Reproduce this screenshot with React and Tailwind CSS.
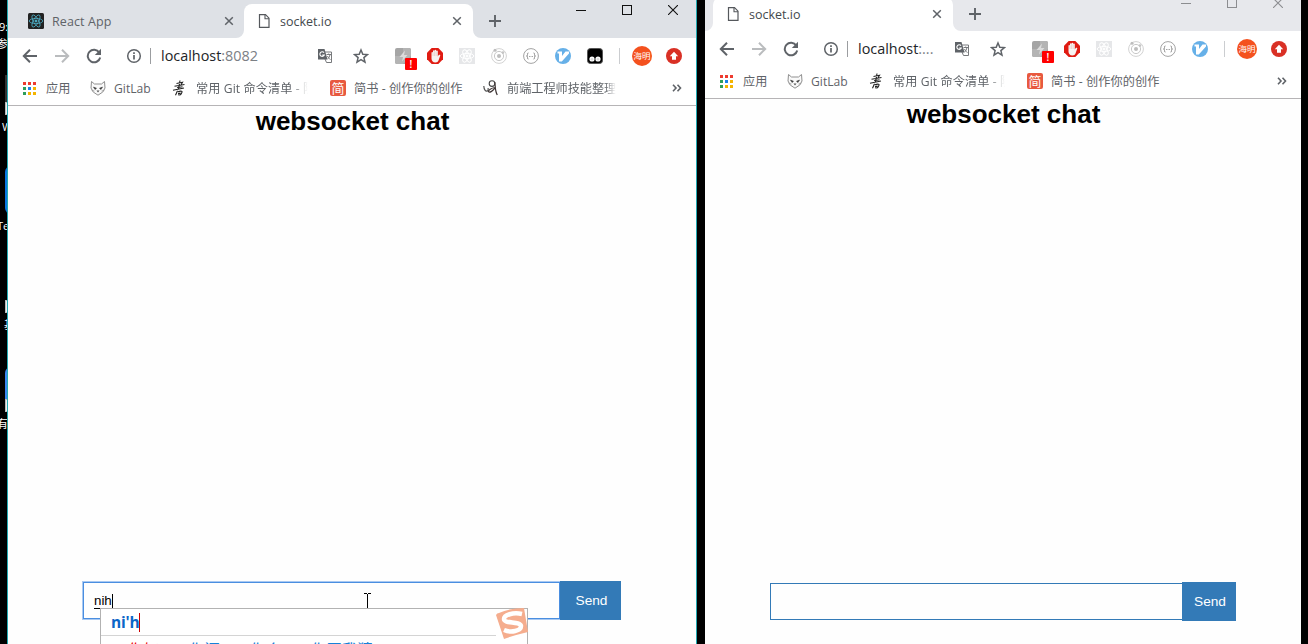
import React from "react";

const UI = "font-['Open_Sans','Noto_Sans_CJK_SC',sans-serif]";

const Svg = ({ s = 16, vb = "0 0 16 16", className = "", children }) => (
  <svg width={s} height={s} viewBox={vb} fill="none" className={"shrink-0 " + className}>{children}</svg>
);

const Back = () => (
  <Svg><path d="M15 8H2M8 1.800 1.800 8 8 14.200" stroke="#5f6368" strokeWidth="2" /></Svg>
);
const Forward = () => (
  <Svg><path d="M1 8H14M8 1.800 14.200 8 8 14.200" stroke="#babcbe" strokeWidth="2" /></Svg>
);
const Reload = () => (
  <Svg>
    <path d="M13.300 4.500A6.300 6.300 0 1 0 14.200 9.500" stroke="#5f6368" strokeWidth="2" />
    <path d="M15 .8V7H8.800Z" fill="#5f6368" />
  </Svg>
);
const Info = () => (
  <Svg>
    <circle cx="8" cy="8" r="6.300" stroke="#5f6368" strokeWidth="1.500" />
    <path d="M8 7v4.500M8 4.300v1.700" stroke="#5f6368" strokeWidth="1.700" />
  </Svg>
);
const Translate = () => (
  <Svg>
    <path d="M6.500 4h8v10.500h-5L8 11" stroke="#77797c" strokeWidth="1" fill="#fff" />
    <path d="M1 1h6.500l3 10.500H1Z" fill="#5f6368" />
    <path d="M7 4.700A2.300 2.300 0 1 0 7.300 7H5.200" stroke="#fff" strokeWidth="1.100" />
    <path d="M9.500 6.500H14M11.700 5.500v1M13 6.700c-.4 2-1.200 3.300-2.500 4.500M10.500 8c.6 1.500 1.500 2.500 3 3.500" stroke="#77797c" />
  </Svg>
);
const Star = () => (
  <Svg>
    <path d="m8 2 1.800 4.200 4.600.4-3.500 3 1.100 4.500L8 11.700l-4 2.400 1.100-4.500-3.500-3 4.600-.4Z" stroke="#5f6368" strokeWidth="1.500" />
  </Svg>
);
const Flash = () => (
  <Svg>
    <rect width="16" height="16" rx="2" fill="#a5a5a5" />
    <path d="M0 8h8V0h6a2 2 0 0 1 2 2v6L8 16H2a2 2 0 0 1-2-2Z" fill="#b4b4b4" />
    <path d="M10 2.500 4.500 9H8l-1 4.500L12.500 7H9Z" fill="#dcdcdc" />
  </Svg>
);
const Hand = () => (
  <Svg>
    <path d="M4.700 0h6.600L16 4.700v6.600L11.300 16H4.700L0 11.300V4.700Z" fill="#e01b12" />
    <path d="M4.500 8.500V4.700c0-1.100 1.500-1.100 1.500 0V3.100c0-1.100 1.600-1.100 1.600 0v-.5c0-1.100 1.600-1.100 1.600 0v.7c0-1.100 1.600-1.100 1.600 0v5.200l.9-1.500c.7-.8 1.900-.1 1.500.8L11.500 12.500c-.5 1.200-1.400 1.900-3 1.900-2.700 0-4-1.800-4-4Z" fill="#f7f4f2" />
    <path d="M6 4.500V8M7.600 3.200V8M9.200 3.500V8" stroke="#d8a9a5" strokeWidth=".4" />
  </Svg>
);
const Orbits = ({ color, w = 0.8 }) => (
  <g stroke={color} strokeWidth={w}>
    <ellipse cx="8" cy="8" rx="6.800" ry="2.600" />
    <ellipse cx="8" cy="8" rx="6.800" ry="2.600" transform="rotate(60 8 8)" />
    <ellipse cx="8" cy="8" rx="6.800" ry="2.600" transform="rotate(120 8 8)" />
    <circle cx="8" cy="8" r="1.100" fill={color} />
  </g>
);
const ReactGray = () => (
  <Svg><rect width="16" height="16" fill="#e6e7e9" /><Orbits color="#fff" w={1} /></Svg>
);
const ReactTab = () => (
  <Svg><rect width="16" height="16" rx="1.500" fill="#222" /><Orbits color="#4fb3cc" w={0.75} /></Svg>
);
const Radar = () => (
  <Svg>
    <circle cx="8" cy="8" r="7.400" stroke="#d2d2d2" />
    <circle cx="8" cy="8" r="4.600" stroke="#c8c8c8" />
    <circle cx="8" cy="8" r="2" fill="#bdbdbd" />
    <circle cx="4" cy="2.200" r="1.500" fill="#bdbdbd" />
    <circle cx="12" cy="4.600" r="1.300" fill="#c4c4c4" />
  </Svg>
);
const Braces = () => (
  <Svg>
    <circle cx="8" cy="8" r="7.400" stroke="#a2a2a2" />
    <path d="M5.500 5c-1.300 0-1 .6-1 1.600S4.300 8 3.500 8c.8 0 1 .4 1 1.400s-.3 1.600 1 1.600M10.500 5c1.300 0 1 .6 1 1.600s.2 1.400 1 1.400c-.8 0-1 .4-1 1.400s.3 1.600-1 1.600" stroke="#8c8c8c" />
    <path d="M6 8.500h4" stroke="#a5a5a5" strokeDasharray="1 .5" />
  </Svg>
);
const Vim = () => (
  <Svg>
    <circle cx="8" cy="8" r="8" fill="#66b0e8" />
    <path d="M2.500 3.500H7V8L10.500 3.500H14V5.500L6.800 13.500H4V5.500H2.500Z" fill="#fff" />
  </Svg>
);
const Monkey = () => (
  <Svg>
    <rect x=".5" y=".5" width="15" height="15" rx="3" fill="#000" stroke="#555" />
    <circle cx="5" cy="11" r="2.600" fill="#fff" /><circle cx="11" cy="11" r="2.600" fill="#fff" />
    <circle cx="5" cy="11.300" r="1.300" fill="#ddd" /><circle cx="11" cy="11.300" r="1.300" fill="#ddd" />
  </Svg>
);
const Update = () => (
  <Svg><circle cx="8" cy="8" r="8" fill="#d93025" /><path d="m8 3.800 4.200 4.400H10v3.600H6V8.200H3.800Z" fill="#fff" /></Svg>
);
const Apps = () => {
  const c = ["#ee3b2f", "#ee3b2f", "#ee3b2f", "#2e9e5b", "#1a82e8", "#f4b400", "#2e9e5b", "#f4b400", "#f4b400"];
  return (
    <Svg s={13} vb="0 0 13 13">
      {c.map((f, i) => <rect key={i} x={(i % 3) * 5} y={Math.floor(i / 3) * 5} width="3" height="3" fill={f} />)}
    </Svg>
  );
};
const Fox = () => (
  <Svg>
    <path d="M1.500 1.500 4.500 4h7l3-2.500.5 6.500-2.200 4L8 15.200 3.200 12 1 8Z" stroke="#8f8f8f" fill="#fafafa" />
    <path d="m3.500 7 3 1.300-1.500 1.200ZM12.500 7l-3 1.300 1.500 1.200Z" fill="#333" stroke="#444" strokeWidth=".6" />
    <path d="M6.500 10.500h3L8 12.500Z" fill="#555" />
    <path d="m1.500 10 3 1M14.500 10l-3 1" stroke="#999" strokeWidth=".7" />
  </Svg>
);
const Brush = () => (
  <Svg>
    <path d="M9 .5 7.500 9M5.500 3.500l6-1.300-1.500 2.500M3.500 6.200l10-1.700M6 7.700l5.500-1M2 10.200 13 8M6.500 10.800 4.500 15.300M7 11.700c2-.7 4.500-1 4 .5-.3 1.200-1 2.300-2 2.800l-2-.3M7 13.500l2.500-.4" stroke="#222" strokeWidth="1.100" />
  </Svg>
);
const Scribble = () => (
  <Svg>
    <path d="M.8 6C1 9.500 2.500 12 4.500 11c1-.8.800-2 .6-3" stroke="#555" strokeWidth="1.200" />
    <circle cx="9" cy="3.600" r="2.800" stroke="#444" strokeWidth="1.100" />
    <path d="M11.800 2c.6 4 .2 9.500 2.500 13M11.800 7.500C8.500 8 5 10 5.500 11.700c1 1.200 5-.7 6.500-4.200" stroke="#3e3535" strokeWidth="1.200" />
  </Svg>
);
const Page = () => (
  <Svg>
    <path d="M3.500 1.700h6l3.500 3.500v9.100H3.500Z" stroke="#55585c" strokeWidth="1.200" />
    <path d="M9 1.500v4.200h4" stroke="#55585c" strokeWidth="1.100" />
  </Svg>
);
const Cross = () => (
  <Svg s={10} vb="0 0 10 10"><path d="m1.200 1.200 7.600 7.600M8.800 1.200 1.200 8.800" stroke="#5f6368" strokeWidth="1.500" /></Svg>
);
const Plus = () => (
  <Svg s={12} vb="0 0 12 12"><path d="M6 0v12M0 6h12" stroke="#5f6368" strokeWidth="1.900" /></Svg>
);
const Curve = ({ flip }) => (
  <svg width="8" height="8" viewBox="0 0 8 8" className="shrink-0 self-end">
    <path d={flip ? "M0 0v8h8A8 8 0 0 1 0 0Z" : "M8 0v8H0A8 8 0 0 0 8 0Z"} fill="#fff" />
  </svg>
);
const WindowButtons = ({ color }) => (
  <div className="flex h-5 items-center">
    <div className="flex w-[46px] justify-center"><svg width="10" height="11"><path d="M0 5.500h10" stroke={color} /></svg></div>
    <div className="flex w-[46px] justify-center"><svg width="10" height="10"><rect x=".5" y=".5" width="9" height="9" fill="none" stroke={color} /></svg></div>
    <div className="flex w-[46px] justify-center"><svg width="10" height="10"><path d="m0 0 10 10M10 0 0 10" stroke={color} strokeWidth="1.100" /></svg></div>
  </div>
);

const Cell = ({ w = "w-8", children }) => <div className={w + " flex shrink-0 justify-center"}>{children}</div>;

function Toolbar({ url, port, monkey }) {
  return (
    <div className="flex h-9 shrink-0 items-center bg-white px-1.5">
      <Cell><Back /></Cell>
      <Cell><Forward /></Cell>
      <Cell><Reload /></Cell>
      <div className="ml-2 flex w-8 justify-center"><Info /></div>
      <div className="h-4 w-px bg-[#9b9da0]" />
      <div className="ml-[10px] text-[14.400px] leading-5 whitespace-nowrap text-[#222428]">{url}<span className="text-[#7c8085]">{port}</span></div>
      <div className="grow" />
      <Cell w="w-9"><Translate /></Cell>
      <Cell w="w-9"><Star /></Cell>
      <div className="relative ml-2 flex w-8 shrink-0 justify-center">
        <Flash />
        <span className="absolute top-[10px] left-[18px] flex h-3 w-3 items-center justify-center rounded-[1px] bg-[#f00] text-[10px] leading-none font-semibold text-white">!</span>
      </div>
      <Cell><Hand /></Cell>
      <Cell><ReactGray /></Cell>
      <Cell><Radar /></Cell>
      <Cell><Braces /></Cell>
      <Cell><Vim /></Cell>
      {monkey && <Cell><Monkey /></Cell>}
      <div className="flex w-[15px] shrink-0 pl-2"><div className="h-4 w-px bg-[#cbcdd0]" /></div>
      <Cell><div className="flex h-5 w-5 items-center justify-center rounded-full bg-[#f4511e] text-[8.500px] leading-none whitespace-nowrap text-white">海明</div></Cell>
      <Cell><Update /></Cell>
    </div>
  );
}

const label = "whitespace-nowrap overflow-hidden pt-0.5";
function Bookmarks({ extra }) {
  return (
    <div className="flex h-8 shrink-0 items-center border-b border-[#b6b4b6] bg-white pr-[14px] pb-[3px] pl-[15px] text-[12.150px] leading-5 text-[#5f6368]">
      <Apps />
      <div className={label + " ml-[10px] w-[37px]"}>应用</div>
      <div className="ml-[7px]"><Fox /></div>
      <div className={label + " ml-2 w-[51px]"}>GitLab</div>
      <div className="ml-[6px]"><Brush /></div>
      <div className={label + " ml-[9px] w-[112px] tracking-[0.1px] mask-r-from-85%"}>常用 Git 命令清单 - 阮</div>
      <div className="ml-[22px] flex h-4 w-4 shrink-0 items-center justify-center rounded-[2px] bg-[#e8593f] text-[13px] leading-none text-white">简</div>
      <div className={label + " ml-2 w-[122px] tracking-[0.1px]"}>简书 - 创作你的创作</div>
      {extra && (
        <>
          <div className="ml-[7px]"><Scribble /></div>
          <div className={label + " ml-2 w-[109px] mask-r-from-90%"}>前端工程师技能整理</div>
        </>
      )}
      <div className="grow" />
      <Svg s={10} vb="0 0 10 10"><path d="m1 1.800 3 3.200-3 3.200M5.500 1.800l3 3.200-3 3.200" stroke="#5f6368" strokeWidth="1.600" /></Svg>
    </div>
  );
}

function LeftWindow() {
  return (
    <div className="flex h-full w-[690px] shrink-0 flex-col overflow-hidden border-x border-[#22aab2] bg-[#fefefe]">
      <div className="flex h-[38px] shrink-0 bg-[#dee1e6] text-[12.500px] text-[#5f6368]">
        <div className="flex w-[228px] items-center pt-1 pr-[2px] pl-5">
          <ReactTab />
          <div className="ml-2 grow pt-0.5 tracking-[0.1px]">React App</div>
          <Cross />
        </div>
        <Curve />
        <div className="mt-1 flex w-[229px] items-center rounded-t-lg bg-white pr-[11px] pl-3">
          <Page />
          <div className="ml-2 grow pt-0.5 text-[#45494d]">socket.io</div>
          <Cross />
        </div>
        <Curve flip />
        <div className="ml-2 flex items-center pt-1"><Plus /></div>
        <div className="grow" />
        <WindowButtons color="#111" />
      </div>
      <Toolbar url="localhost" port=":8082" monkey />
      <Bookmarks extra />
      <div className="flex grow flex-col font-['Liberation_Sans',sans-serif]">
        <h1 className="-mt-px pl-px text-center text-[26px] leading-[32px] font-bold text-black">websocket chat</h1>
        <div className="relative mt-auto mb-6 ml-[74px] flex h-[39px] w-[539px]">
          <div className="flex h-[39px] grow items-center border border-r-0 border-[#a9c9f2]">
            <div className="flex h-full grow items-center border border-[#4a8ee0] pt-px pl-[10px] text-[13.333px] text-black">
              <span className="border-b border-black leading-[14px]">nih</span>
              <span className="h-[15px] w-px bg-black" />
            </div>
          </div>
          <div className="flex w-[61px] items-center justify-center bg-[#337ab7] pt-0.5 pl-0.5 text-[13.700px] text-white">Send</div>
          <svg width="7" height="16" className="absolute top-3 left-[282px]"><path d="M0 .5h3M4 .5h3M3.500 1v14M0 15.500h3M4 15.500h3" stroke="#000" /></svg>
          <Ime />
        </div>
      </div>
    </div>
  );
}

function Ime() {
  const words = ["你还", "你会", "你画我猜"];
  return (
    <div className={"absolute top-[27px] left-[18px] h-[60px] w-[428px] border border-[#b2b2b2] bg-white " + UI}>
      <div className="flex h-[27px] w-[395px] items-center border-b border-[#d4d4d4] pl-[10px] text-[15.500px] font-bold text-[#0b66c8]">
        <span className="leading-5 tracking-[-0.2px]">ni'h</span><span className="h-[19px] w-px bg-[#c00]" />
      </div>
      <div className="flex pt-[2px] pl-[14px] text-[15.500px] leading-6 whitespace-nowrap text-[#1782d8]">
        <span className="w-[61px] text-[#e00]">1.你好</span>
        {words.map((w, i) => <span key={w} className="w-[61px]">{i + 2}.{w}</span>)}
      </div>
      <svg width="34" height="34" viewBox="0 0 34 34" className="absolute top-[-2px] right-[-2px]">
        <path d="M4 6Q15 1 29 1 31 13 33 25 20 28 9 32 5 20 1 8Q2 6 4 6Z" fill="#f5ad8e" />
        <path d="M27 7C18 5 9 8 9 12c0 5 16 2 17 7 0 5-10 7-17 4" fill="none" stroke="#fff" strokeWidth="4.500" />
      </svg>
    </div>
  );
}

function RightWindow() {
  return (
    <div className="flex h-full w-[596px] shrink-0 flex-col overflow-hidden bg-[#fefefe]">
      <div className="-mt-[7px] flex h-[38px] shrink-0 bg-[#e7e8ec] text-[12.500px] text-[#5f6368]">
        <Curve />
        <div className="mt-1 flex w-[240px] items-center rounded-t-lg bg-white pr-[11px] pl-3">
          <Page />
          <div className="ml-2 grow pt-0.5 text-[#45494d]">socket.io</div>
          <Cross />
        </div>
        <Curve flip />
        <div className="ml-2 flex items-center pt-1"><Plus /></div>
        <div className="grow" />
        <WindowButtons color="#8c8d90" />
      </div>
      <Toolbar url="localhost" port=":..." />
      <Bookmarks />
      <div className="flex grow flex-col font-['Liberation_Sans',sans-serif]">
        <h1 className="-mt-px pl-px text-center text-[26px] leading-[32px] font-bold text-black">websocket chat</h1>
        <div className="mt-auto mb-[23px] ml-[65px] flex h-[39px] w-[466px]">
          <div className="my-[1px] grow border border-r-0 border-[#337ab7]" />
          <div className="flex w-[54px] items-center justify-center bg-[#337ab7] pt-0.5 pl-0.5 text-[13.700px] text-white">Send</div>
        </div>
      </div>
    </div>
  );
}

function Desktop() {
  return (
    <div className="relative h-full w-[7px] shrink-0 overflow-hidden text-[11px] leading-[14px] text-white">
      <span className="absolute top-5 -left-px">9:</span>
      <span className="absolute top-[37px] -left-[3px]">参</span>
      <div className="absolute top-[75px] left-[5px] h-[27px] w-2 bg-[#333]" />
      <div className="absolute top-[102px] left-[5px] h-[13px] w-4 border border-[#bbb] bg-[#eee]" />
      <span className="absolute top-[120px] left-[2px]">W</span>
      <div className="absolute top-[166px] left-[5px] h-[48px] w-8 rounded-md bg-[#0b76e0]" />
      <span className="absolute top-[219px] -left-[3px]">Te</span>
      <div className="absolute top-[300px] left-[5px] h-[13px] w-4 border border-[#bbb] bg-[#eee]" />
      <span className="absolute top-[318px] left-[4px]">基</span>
      <div className="absolute top-[367px] left-[5px] h-[34px] w-8 rounded-t-md bg-[#3b86f0]" />
      <div className="absolute top-[399px] left-[5px] h-[13px] w-4 border border-[#bbb] bg-[#eee]" />
      <span className="absolute top-[417px] -left-[3px]">有</span>
    </div>
  );
}

export default function App() {
  return (
    <div className={"flex h-[644px] w-[1308px] overflow-hidden bg-black " + UI}>
      <Desktop />
      <LeftWindow />
      <div className="w-2 shrink-0" />
      <RightWindow />
    </div>
  );
}
